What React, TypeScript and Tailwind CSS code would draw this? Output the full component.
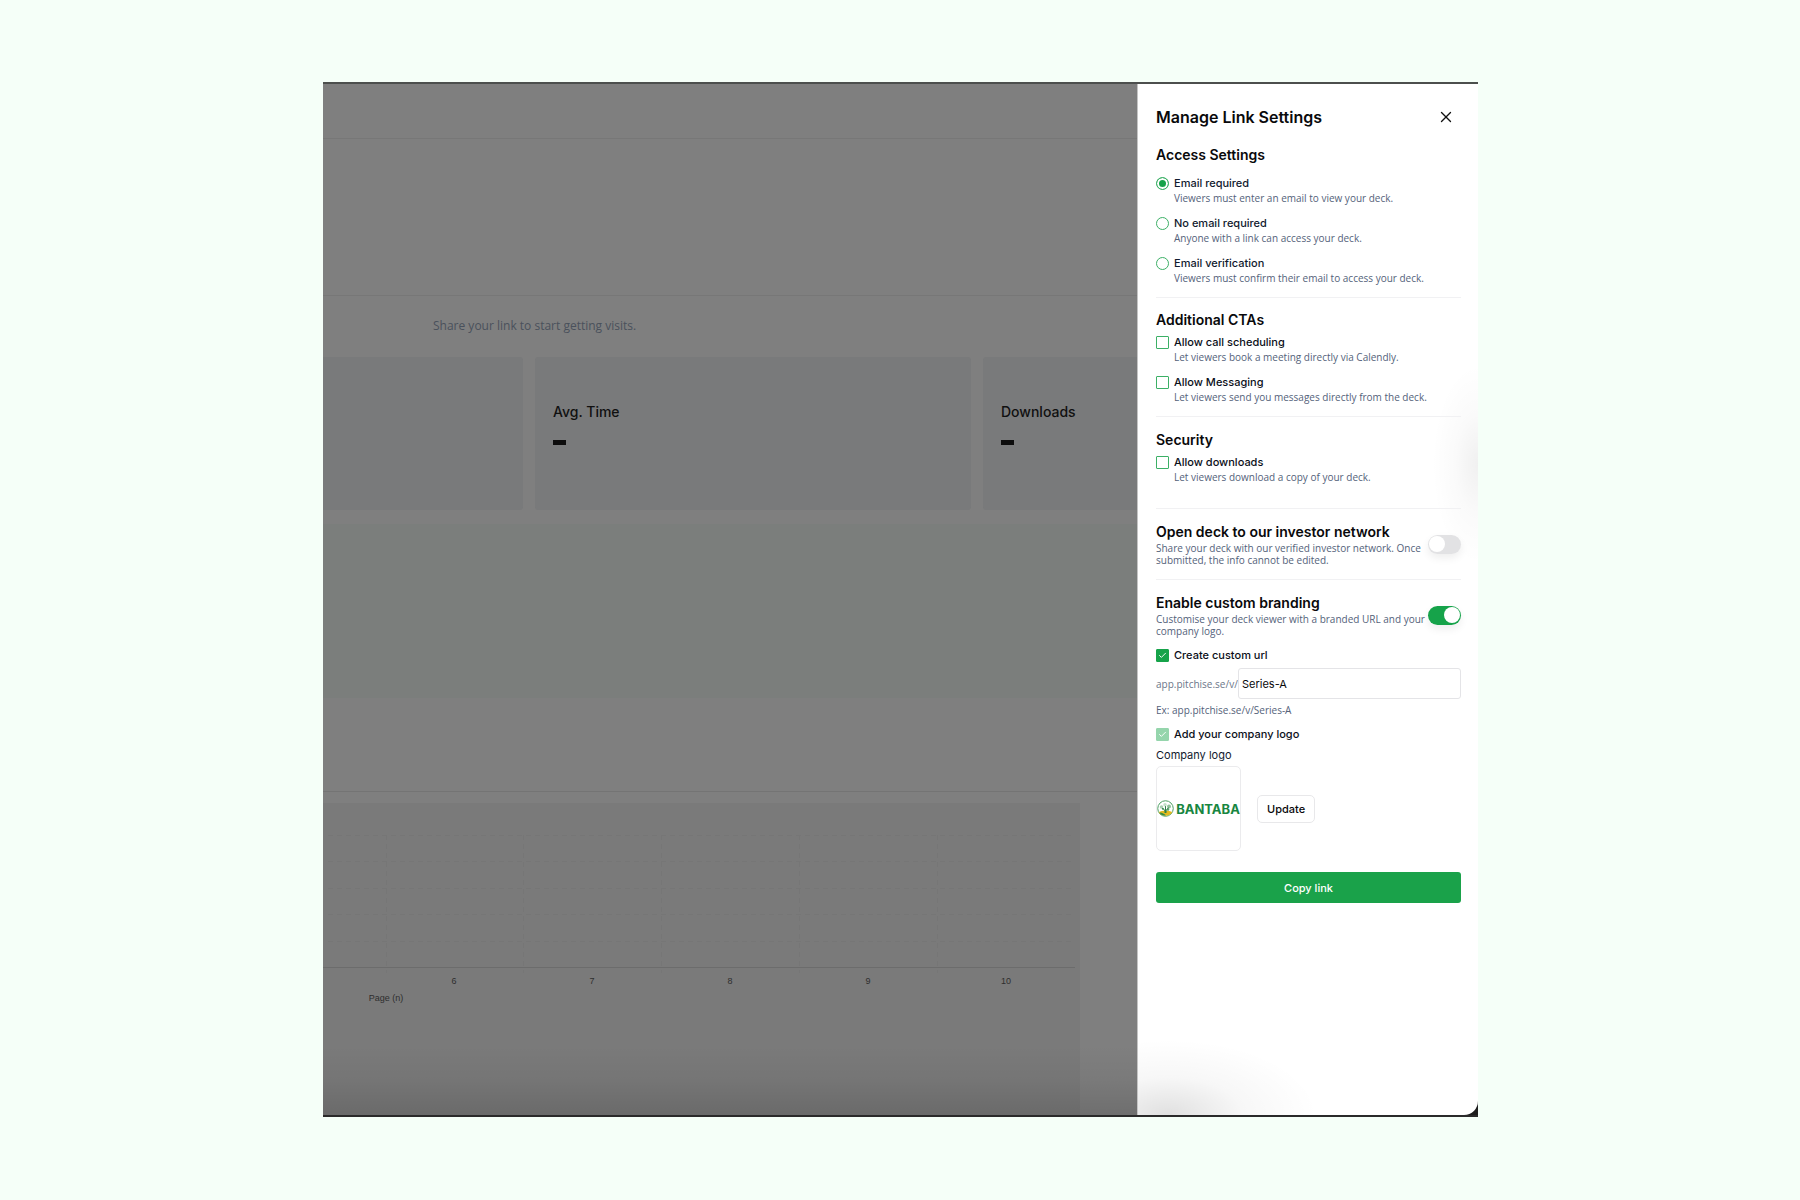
import React, { useState } from 'react';
import { Check, X } from 'lucide-react';

const accessOptions = [
  { id: 'required', label: 'Email required', hint: 'Viewers must enter an email to view your deck.' },
  { id: 'none', label: 'No email required', hint: 'Anyone with a link can access your deck.' },
  { id: 'verification', label: 'Email verification', hint: 'Viewers must confirm their email to access your deck.' },
];

const gridRows = [32, 58, 85, 111, 138];
const gridColumns = [63, 200, 338, 476, 614];
const pageLabels = [
  { x: 131, page: 6 },
  { x: 269, page: 7 },
  { x: 407, page: 8 },
  { x: 545, page: 9 },
  { x: 683, page: 10 },
];

interface TickBoxProps {
  id: string;
  label: string;
  hint?: string;
  checked?: boolean;
  disabled?: boolean;
}

const Hint: React.FC<{ children: React.ReactNode }> = ({ children }) => (
  <p className="font-['Open_Sans',sans-serif] text-[10px] leading-[15px] text-[#54627a]">{children}</p>
);

const TickBox: React.FC<TickBoxProps> = ({ id, label, hint, checked = false, disabled = false }) => (
  <div className="flex gap-[5px]">
    <span className="relative mt-[2px] size-[13px] shrink-0">
      <input
        id={id}
        type="checkbox"
        defaultChecked={checked}
        disabled={disabled}
        className="peer block size-[13px] appearance-none rounded-[1px] border border-[#3cb066] bg-white checked:border-[#16a34a] checked:bg-[#16a34a] disabled:opacity-45"
      />
      <Check
        className="pointer-events-none absolute top-[2px] left-[2px] hidden size-[9px] text-white peer-checked:block"
        strokeWidth={2.5}
      />
    </span>
    <div>
      <label htmlFor={id} className="block text-[11px] leading-4 font-medium text-[#0b0f19]">{label}</label>
      {hint && <Hint>{hint}</Hint>}
    </div>
  </div>
);

const Switch: React.FC<{ label: string; initial: boolean }> = ({ label, initial }) => {
  const [on, setOn] = useState(initial);
  return (
    <button
      type="button"
      role="switch"
      aria-checked={on}
      aria-label={label}
      onClick={() => setOn(!on)}
      className={`flex h-[19px] w-[33px] shrink-0 items-center rounded-full px-px shadow-[0_4px_8px_rgba(0,0,0,0.07)] ${
        on ? 'justify-end bg-[#16a34a]' : 'justify-start bg-[#e2e2e4]'
      }`}
    >
      <span className="size-4 rounded-full bg-white" />
    </button>
  );
};

const SectionTitle: React.FC<{ children: React.ReactNode }> = ({ children }) => (
  <h3 className="text-[14px] leading-5 font-semibold text-[#09090b]">{children}</h3>
);

const BantabaLogo: React.FC = () => (
  <div className="flex items-center gap-[2px]">
    <svg viewBox="0 0 34 34" className="size-[17px] shrink-0">
      <circle cx="17" cy="17" r="15.5" fill="#fff" stroke="#4d9f62" strokeWidth="2" />
      <path d="M3.5 24c7-3.500 20-3.500 27 0-2.500 5-8 7.500-13.500 7.500S6 29 3.500 24z" fill="#e3b91d" />
      <path d="M5 25c6 .5 9 2.500 13 5.500-6 1.500-10.500-1-13-5.500z" fill="#2e8b47" />
      <circle cx="9" cy="14" r="3.500" fill="#a9cfb0" />
      <circle cx="16" cy="9.500" r="3.500" fill="#c3dfc8" />
      <circle cx="24" cy="13" r="4" fill="#8fc199" />
      <circle cx="22" cy="19" r="2.500" fill="#5da36c" />
      <circle cx="12" cy="18" r="2" fill="#5da36c" />
      <path d="M16 25c1-5-2-7-5-8M18 25c-.5-6 2-7 5-9M17 25V13" fill="none" stroke="#2e8048" strokeWidth="2" strokeLinecap="round" />
    </svg>
    <span className="text-[13px] leading-4 font-bold text-[#188641]">BANTABA</span>
  </div>
);

const StatCard: React.FC<{ title: string }> = ({ title }) => (
  <>
    <h4 className="text-[14px] leading-5 font-medium">{title}</h4>
    <div className="flex h-10 items-center" aria-label="No data">
      <span className="h-[5px] w-[13px] bg-[#0d0d0d]" />
    </div>
  </>
);

const Dashboard: React.FC = () => (
  <section className="relative flex min-w-0 flex-1 flex-col overflow-hidden bg-[#7f7f7f] text-[#101010]">
    <div className="h-[55px] border-b border-[#777777]" />
    <div className="h-[157px] border-b border-[#777777]" />
    <p className="pt-5 pl-[110px] font-['Open_Sans',sans-serif] text-[12px] leading-5 text-[#4a515c]">Share your link to start getting visits.</p>

    <div className="mt-[21px] flex h-[153px] gap-3">
      <div className="w-[200px] rounded-r-[3px] bg-[#797a7b]" />
      <div className="flex-1 rounded-[3px] bg-[#797a7b] px-[18px] pt-[45px]">
        <StatCard title="Avg. Time" />
      </div>
      <div className="w-[154px] rounded-l-[3px] bg-[#797a7b] px-[18px] pt-[45px]">
        <StatCard title="Downloads" />
      </div>
    </div>
    <div className="mt-[14px] h-[174px] bg-[#7b7e7c]" />
    <div className="h-[94px] border-b border-[#747474]" />

    {/* Page chart */}
    <div className="mt-[11px] mr-[57px] flex-1 bg-[#7a7a7a]">
      <svg className="h-[220px] w-full" fontFamily="Liberation Sans, Arial, sans-serif" fontSize="9">
        <g stroke="#767676" strokeDasharray="5 4">
          {gridRows.map(y => (
            <line key={y} x1="5" x2="752" y1={y + 0.5} y2={y + 0.5} />
          ))}
          {gridColumns.map(x => (
            <line key={x} x1={x + 0.5} x2={x + 0.5} y1="32" y2="170" />
          ))}
        </g>
        <line x1="0" x2="752" y1="164.500" y2="164.500" stroke="#6c6c6c" />
        <g fill="#2e2e2e" textAnchor="middle">
          {pageLabels.map(({ x, page }) => (
            <text key={page} x={x} y="181">{page}</text>
          ))}
          <text x="63" y="198">Page (n)</text>
        </g>
      </svg>
    </div>
    <div className="pointer-events-none absolute inset-x-0 bottom-0 h-[70px] bg-linear-to-t from-black/13 via-black/4 to-transparent" />
  </section>
);

const LinkSettings: React.FC = () => {
  const [access, setAccess] = useState('required');
  const [slug, setSlug] = useState('Series-A');

  return (
    <aside className="relative w-[341px] shrink-0 overflow-hidden rounded-br-[14px] border-l border-[#c4c4c4] bg-white pt-[21px] pr-[17px] pb-10 pl-[18px]">
      {/* Soft shadows at the bottom and the right edge */}
      <div className="pointer-events-none absolute inset-x-0 bottom-0 h-20 bg-[radial-gradient(ellipse_150px_76px_at_30px_100%,rgba(0,0,0,0.12),rgba(0,0,0,0.03)_50%,transparent)]" />
      <div className="pointer-events-none absolute top-[270px] right-0 h-[220px] w-[50px] bg-[radial-gradient(ellipse_46px_100px_at_100%_50%,rgba(0,0,0,0.06),rgba(0,0,0,0.02)_50%,transparent)]" />

      <div className="relative">
        <header className="flex h-6 items-center justify-between pr-[6px]">
          <h2 className="text-[16px] leading-6 font-semibold text-[#09090b]">Manage Link Settings</h2>
          <button type="button" aria-label="Close">
            <X className="size-[18px] text-[#111111]" strokeWidth={1.8} />
          </button>
        </header>

        <section className="mt-4 border-b border-[#f1f1f3] pb-[11px]">
          <SectionTitle>Access Settings</SectionTitle>
          <div className="mt-[10px] flex flex-col gap-[9px]">
            {accessOptions.map(option => (
              <div key={option.id} className="flex gap-[5px]">
                <input
                  id={option.id}
                  type="radio"
                  name="access"
                  checked={access === option.id}
                  onChange={() => setAccess(option.id)}
                  className="mt-[2px] block size-[13px] shrink-0 appearance-none rounded-full border border-[#3cb066] bg-white checked:bg-[#16a34a] checked:shadow-[inset_0_0_0_2px_white]"
                />
                <div>
                  <label htmlFor={option.id} className="block text-[11px] leading-4 font-medium text-[#111a2e]">{option.label}</label>
                  <Hint>{option.hint}</Hint>
                </div>
              </div>
            ))}
          </div>
        </section>

        <section className="border-b border-[#f1f1f3] pt-3 pb-[11px]">
          <SectionTitle>Additional CTAs</SectionTitle>
          <div className="mt-1 flex flex-col gap-[9px]">
            <TickBox id="scheduling" label="Allow call scheduling" hint="Let viewers book a meeting directly via Calendly." />
            <TickBox id="messaging" label="Allow Messaging" hint="Let viewers send you messages directly from the deck." />
          </div>
        </section>

        <section className="border-b border-[#f1f1f3] pt-[13px] pb-[23px]">
          <SectionTitle>Security</SectionTitle>
          <div className="mt-1">
            <TickBox id="downloads" label="Allow downloads" hint="Let viewers download a copy of your deck." />
          </div>
        </section>

        <section className="flex items-center justify-between border-b border-[#f1f1f3] pt-[13px] pb-[13px]">
          <div>
            <SectionTitle>Open deck to our investor network</SectionTitle>
            <p className="font-['Open_Sans',sans-serif] text-[10px] leading-3 text-[#54627a]">
              Share your deck with our verified investor network. Once submitted, the info cannot be edited.
            </p>
          </div>
          <Switch label="Open deck to our investor network" initial={false} />
        </section>

        <section className="pt-[13px]">
          <div className="flex items-center justify-between">
            <div>
              <SectionTitle>Enable custom branding</SectionTitle>
              <p className="font-['Open_Sans',sans-serif] text-[10px] leading-3 text-[#54627a]">
                Customise your deck viewer with a branded URL and your company logo.
              </p>
            </div>
            <Switch label="Enable custom branding" initial={true} />
          </div>

          <div className="mt-[10px]">
            <TickBox id="custom-url" label="Create custom url" checked />
          </div>
          <div className="mt-[5px] flex items-center">
            <label htmlFor="slug" className="w-[82px] shrink-0 font-['Open_Sans',sans-serif] text-[10px] leading-4 text-[#6b7689]">app.pitchise.se/v/</label>
            <input
              id="slug"
              type="text"
              value={slug}
              onChange={e => setSlug(e.target.value)}
              className="h-[31px] min-w-0 flex-1 rounded-[3px] border border-[#e4e4e7] bg-white px-[3px] text-[11px] text-[#09090b]"
            />
          </div>
          <p className="mt-1 font-['Open_Sans',sans-serif] text-[10px] leading-[15px] text-[#54627a]">Ex: app.pitchise.se/v/{slug}</p>

          <div className="mt-2">
            <TickBox id="company-logo" label="Add your company logo" checked disabled />
          </div>
          <p className="mt-[5px] text-[11px] leading-4 text-[#111a2e]">Company logo</p>
          <div className="mt-[3px] flex items-center gap-4">
            <div className="flex size-[85px] items-center justify-center rounded-[5px] border border-[#ebebed]">
              <BantabaLogo />
            </div>
            <button type="button" className="h-7 rounded-[5px] border border-[#e8e8ea] px-[9px] text-[11px] leading-4 font-medium text-[#09090b]">
              Update
            </button>
          </div>
          <button type="button" className="mt-[21px] block h-[31px] w-full rounded-[3px] bg-[#1aa24a] text-[11px] leading-4 font-medium text-white">
            Copy link
          </button>
        </section>
      </div>
    </aside>
  );
};

export default function App() {
  return (
    <main className="flex min-h-screen flex-col bg-[#f5fff8] pt-[82px] pb-[83px] pl-px font-[Inter,sans-serif]">
      <div className="mx-auto flex w-full max-w-[1155px] flex-1 border-y-2 border-t-[#4c4f4d] border-b-[#2a2a2a] bg-[#1d1d1d]">
        <Dashboard />
        <LinkSettings />
      </div>
    </main>
  );
}
